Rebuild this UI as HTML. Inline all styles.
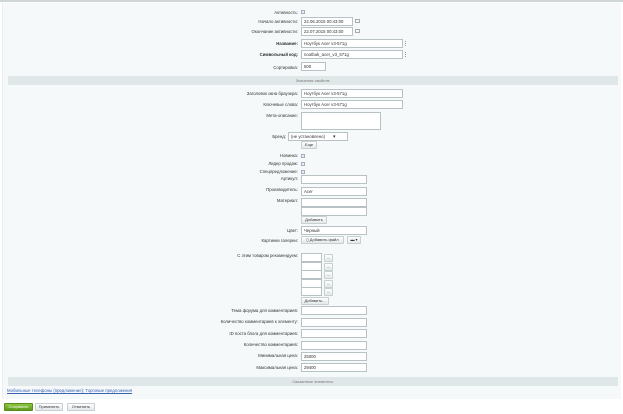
<!DOCTYPE html>
<html><head><meta charset="utf-8"><style>
*{margin:0;padding:0;box-sizing:border-box}
body{width:623px;height:414px;background:#fff;position:relative;overflow:hidden;font-family:"Liberation Sans",sans-serif;font-size:4.3px;color:#333}
.a{position:absolute}
.l{position:absolute;right:325px;white-space:nowrap;text-align:right}
.i{position:absolute;height:9px;background:#fff;border:1px solid #b8c2c4;font-size:4.3px;padding-left:2px;line-height:7px;white-space:nowrap}
.cb{position:absolute;width:4px;height:4px;border:1px solid #aab;background:#eef;left:301px}
.btn{position:absolute;height:8px;border:1px solid #c8cfd1;border-radius:1px;background:linear-gradient(#fff,#e3e8ea);font-size:4px;line-height:6px;text-align:center}
.band{position:absolute;left:8px;width:610px;height:9px;background:#e0e7e9;text-align:center;line-height:9px;color:#777;font-size:4px}
.mk{position:absolute;left:405px;width:1px;height:5px;border-left:1px dotted #999}
</style></head><body>
<div class="a" style="left:0;top:0;width:623px;height:2px;background:#cfd6d8"></div>
<div class="a" style="left:2px;top:3px;width:619px;height:396px;background:#f5f9fa;border-left:1px solid #e6eeef"></div>

<div class="l" style="top:10px">Активность:</div><div class="cb" style="top:10px"></div>
<div class="l" style="top:19px">Начало активности:</div><div class="i" style="left:301px;top:17px;width:52px">22.06.2015 00:43:00</div><div class="a" style="left:355px;top:19px;width:5px;height:4px;border:1px solid #aaa"></div>
<div class="l" style="top:29px">Окончание активности:</div><div class="i" style="left:301px;top:27px;width:52px">22.07.2015 00:43:00</div><div class="a" style="left:355px;top:29px;width:5px;height:4px;border:1px solid #aaa"></div>
<div class="l" style="top:41px;font-weight:bold">Название:</div><div class="i" style="left:301px;top:39px;width:102px">Ноутбук Acer v3-571g</div><div class="mk" style="top:41px"></div>
<div class="l" style="top:52px;font-weight:bold">Символьный код:</div><div class="i" style="left:301px;top:50px;width:102px">noutbuk_acer_v3_571g</div><div class="mk" style="top:52px"></div>
<div class="l" style="top:65px">Сортировка:</div><div class="i" style="left:301px;top:62px;width:25px">500</div>

<div class="band" style="top:76px">Значения свойств:</div>

<div class="l" style="top:91px">Заголовок окна браузера:</div><div class="i" style="left:301px;top:89px;width:102px">Ноутбук Acer v3-571g</div>
<div class="l" style="top:102px">Ключевые слова:</div><div class="i" style="left:301px;top:100px;width:102px">Ноутбук Acer v3-571g</div>
<div class="l" style="top:113px">Мета-описание:</div><div class="i" style="left:301px;top:112px;width:80px;height:18px"></div>
<div class="l" style="top:134px;right:337px">Бренд:</div><div class="i" style="left:288px;top:132px;width:60px">(не установлено) &nbsp; &nbsp; &nbsp;▼</div>
<div class="btn" style="left:301px;top:141px;width:16px">Еще</div>
<div class="l" style="top:153px">Новинка:</div><div class="cb" style="top:154px"></div>
<div class="l" style="top:161px">Лидер продаж:</div><div class="cb" style="top:162px"></div>
<div class="l" style="top:169px">Спецпредложение:</div><div class="cb" style="top:170px"></div>
<div class="l" style="top:176px">Артикул:</div><div class="i" style="left:301px;top:175px;width:66px"></div>
<div class="l" style="top:187px">Производитель:</div><div class="i" style="left:301px;top:187px;width:66px">Acer</div>
<div class="l" style="top:198px">Материал:</div><div class="i" style="left:301px;top:198px;width:66px"></div><div class="i" style="left:301px;top:207px;width:66px"></div>
<div class="btn" style="left:301px;top:216px;width:26px">Добавить</div>
<div class="l" style="top:228px">Цвет:</div><div class="i" style="left:301px;top:226px;width:66px">Черный</div>
<div class="l" style="top:238px">Картинки галереи:</div><div class="btn" style="left:301px;top:236px;width:43px">▯ Добавить файл</div><div class="btn" style="left:347px;top:236px;width:14px">▬ ▾</div>
<div class="l" style="top:253px">С этим товаром рекомендуем:</div>
<div class="i" style="left:301px;top:253px;width:21px"></div><div class="btn" style="left:324px;top:254px;width:9px">...</div>
<div class="i" style="left:301px;top:262px;width:21px"></div><div class="btn" style="left:324px;top:263px;width:9px">...</div>
<div class="i" style="left:301px;top:270px;width:21px"></div><div class="btn" style="left:324px;top:271px;width:9px">...</div>
<div class="i" style="left:301px;top:279px;width:21px"></div><div class="btn" style="left:324px;top:280px;width:9px">...</div>
<div class="i" style="left:301px;top:287px;width:21px"></div><div class="btn" style="left:324px;top:288px;width:9px">...</div>
<div class="btn" style="left:301px;top:297px;width:28px">Добавить...</div>
<div class="l" style="top:308px">Тема форума для комментариев:</div><div class="i" style="left:301px;top:306px;width:66px"></div>
<div class="l" style="top:319px">Количество комментариев к элементу:</div><div class="i" style="left:301px;top:318px;width:66px"></div>
<div class="l" style="top:331px">ID поста блога для комментариев:</div><div class="i" style="left:301px;top:329px;width:66px"></div>
<div class="l" style="top:342px">Количество комментариев:</div><div class="i" style="left:301px;top:341px;width:66px"></div>
<div class="l" style="top:353px">Минимальная цена:</div><div class="i" style="left:301px;top:352px;width:66px">25000</div>
<div class="l" style="top:365px">Максимальная цена:</div><div class="i" style="left:301px;top:363px;width:66px">29400</div>

<div class="band" style="top:377px">Связанные элементы:</div>
<div class="a" style="left:7px;top:388px;color:#3a63b5;text-decoration:underline;font-size:4.3px">Мобильные телефоны (предложение); Торговые предложения</div>

<div class="btn" style="left:4px;top:403px;width:29px;background:linear-gradient(#8dc63f,#5f9a1d);border-color:#5a8c1c;color:#fff">Сохранить</div>
<div class="btn" style="left:35px;top:403px;width:28px">Применить</div>
<div class="btn" style="left:67px;top:403px;width:28px">Отменить</div>
</body></html>
